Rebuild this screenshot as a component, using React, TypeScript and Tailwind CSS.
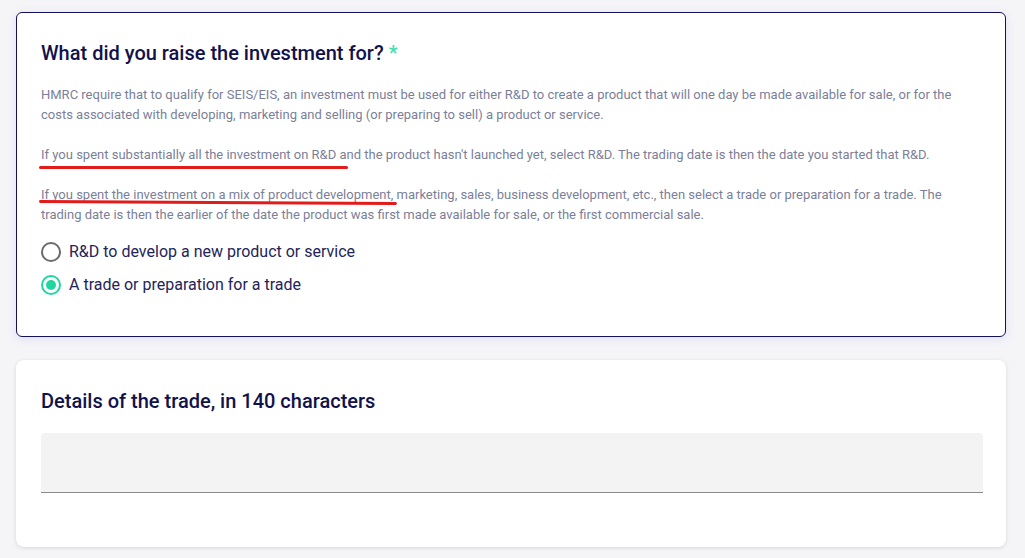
import { useState } from "react";

const options = [
  { id: "rd", label: "R&D to develop a new product or service" },
  { id: "trade", label: "A trade or preparation for a trade" },
];

function Radio({ checked }: { checked: boolean }) {
  return (
    <span
      className={`flex h-5 w-5 shrink-0 items-center justify-center rounded-full border-2 ${
        checked ? "border-[#1fd6a0]" : "border-[#6b6b6b]"
      }`}
    >
      {checked && <span className="h-2.5 w-2.5 rounded-full bg-[#1fd6a0]" />}
    </span>
  );
}

export default function App() {
  const [choice, setChoice] = useState("trade");

  return (
    <div
      className="min-h-[558px] bg-[#f5f5f8] pl-4 pr-[19px] pt-3 pb-3"
      style={{ fontFamily: "Roboto, 'Noto Sans', sans-serif" }}
    >
      {/* question card (selected) */}
      <div className="rounded-md border border-[#14125a] bg-white px-6 pt-6 pb-[35px] shadow-[0_2px_10px_rgba(70,60,200,0.12)]">
        <h2 className="text-xl leading-8 font-medium text-[#12124a]">
          What did you raise the investment for? <span className="text-[#3fe0b0]">*</span>
        </h2>

        <div className="mt-4 text-[13px] leading-5 text-[#7b7f99]">
          <p className="mb-5">
            HMRC require that to qualify for SEIS/EIS, an investment must be used for either R&amp;D to create a
            product that will one day be made available for sale, or for the costs associated with developing,
            marketing and selling (or preparing to sell) a product or service.
          </p>
          <p className="relative mb-5">
            If you spent substantially all the investment on R&amp;D and the product hasn't launched yet, select
            R&amp;D. The trading date is then the date you started that R&amp;D.
            <span className="absolute left-[-2px] top-[21px] h-[3px] w-[309px] rounded-full bg-[#e21b1b]" />
          </p>
          <p className="relative">
            If you spent the investment on a mix of product development, marketing, sales, business development,
            etc., then select a trade or preparation for a trade. The trading date is then the earlier of the date
            the product was first made available for sale, or the first commercial sale.
            <span className="absolute left-[-2px] top-[16px] h-[3px] w-[358px] rotate-[0.3deg] rounded-full bg-[#e21b1b]" />
          </p>
        </div>

        <div className="mt-[11px] flex flex-col gap-px">
          {options.map((o) => (
            <button
              key={o.id}
              type="button"
              onClick={() => setChoice(o.id)}
              className="flex h-8 items-center gap-2 text-left text-base text-[#24245a]"
            >
              <Radio checked={choice === o.id} />
              {o.label}
            </button>
          ))}
        </div>
      </div>

      {/* details card */}
      <div className="mt-[23px] rounded-lg bg-white pl-[25px] pr-[23px] pt-[25px] pb-[54px] shadow-[0_1px_4px_rgba(0,0,0,0.12)]">
        <h2 className="text-xl leading-8 font-medium text-[#12124a]">Details of the trade, in 140 characters</h2>
        <input
          type="text"
          className="mt-4 block h-[60px] w-full rounded-t border-b border-[#8a8a8a] bg-[#f3f3f3] px-3 text-base outline-none"
        />
      </div>
    </div>
  );
}
